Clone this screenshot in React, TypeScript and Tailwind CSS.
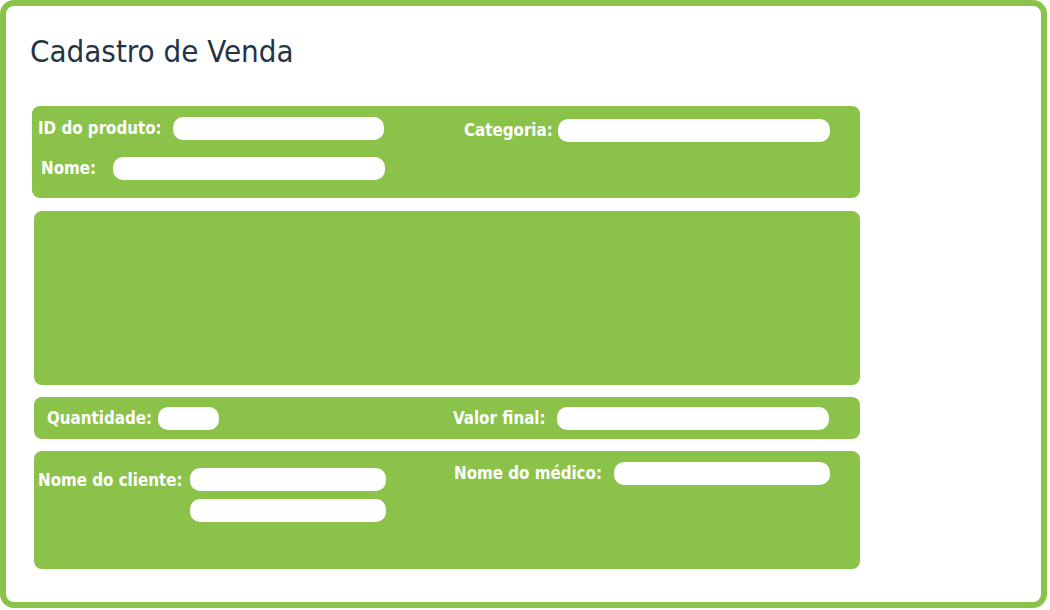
const font = { fontFamily: '"DejaVu Sans", sans-serif' };

const Field = ({ className }: { className: string }) => (
  <div className={`h-[23px] bg-white rounded-[10px] ${className}`} />
);

const Label = ({ children, className = "" }: { children: string; className?: string }) => (
  <span className={`text-white text-[16.8px] font-bold font-stretch-condensed leading-none whitespace-nowrap ${className}`}>
    {children}
  </span>
);

export default function App() {
  return (
    <div className="w-[1050px] h-[610px] bg-white" style={font}>
      <div className="w-[1047px] h-[608px] border-[6px] border-[#8bc34a] rounded-[14px] pl-[26px] pt-[30px]">
        <h1 className="text-[#233445] text-[31px] leading-none font-stretch-condensed ml-[-2px]">
          Cadastro de Venda
        </h1>

        <div className="mt-[39px] flex flex-col gap-[12px] w-[828px]">
          {/* Produto */}
          <div className="h-[92px] bg-[#8bc34a] rounded-[8px] flex pt-[11px]">
            <div className="w-[432px] flex flex-col">
              <div className="flex items-center">
                <Label className="w-[135px] ml-[6px]">ID do produto:</Label>
                <Field className="w-[211px]" />
              </div>
              <div className="flex items-center mt-[17px]">
                <Label className="w-[72px] ml-[9px]">Nome:</Label>
                <Field className="w-[272px]" />
              </div>
            </div>
            <div className="flex items-center h-[23px] mt-[2px]">
              <Label className="w-[94px]">Categoria:</Label>
              <Field className="w-[272px]" />
            </div>
          </div>

          {/* area */}
          <div className="h-[174px] mt-[1px] ml-[2px] bg-[#8bc34a] rounded-[8px]" />

          {/* Quantidade / Valor */}
          <div className="h-[42px] ml-[2px] bg-[#8bc34a] rounded-[8px] flex items-center">
            <div className="w-[419px] flex items-center">
              <Label className="w-[111px] ml-[13px]">Quantidade:</Label>
              <Field className="w-[61px]" />
            </div>
            <Label className="w-[104px]">Valor final:</Label>
            <Field className="w-[272px]" />
          </div>

          {/* Cliente / Medico */}
          <div className="h-[118px] ml-[2px] bg-[#8bc34a] rounded-[8px] flex">
            <div className="w-[420px] flex pt-[17px]">
              <Label className="w-[152px] ml-[4px] mt-[4px]">Nome do cliente:</Label>
              <div className="flex flex-col gap-[8px]">
                <Field className="w-[196px]" />
                <Field className="w-[196px]" />
              </div>
            </div>
            <div className="flex items-start pt-[11px]">
              <Label className="w-[160px] mt-[3px]">Nome do médico:</Label>
              <Field className="w-[216px]" />
            </div>
          </div>
        </div>
      </div>
    </div>
  );
}
